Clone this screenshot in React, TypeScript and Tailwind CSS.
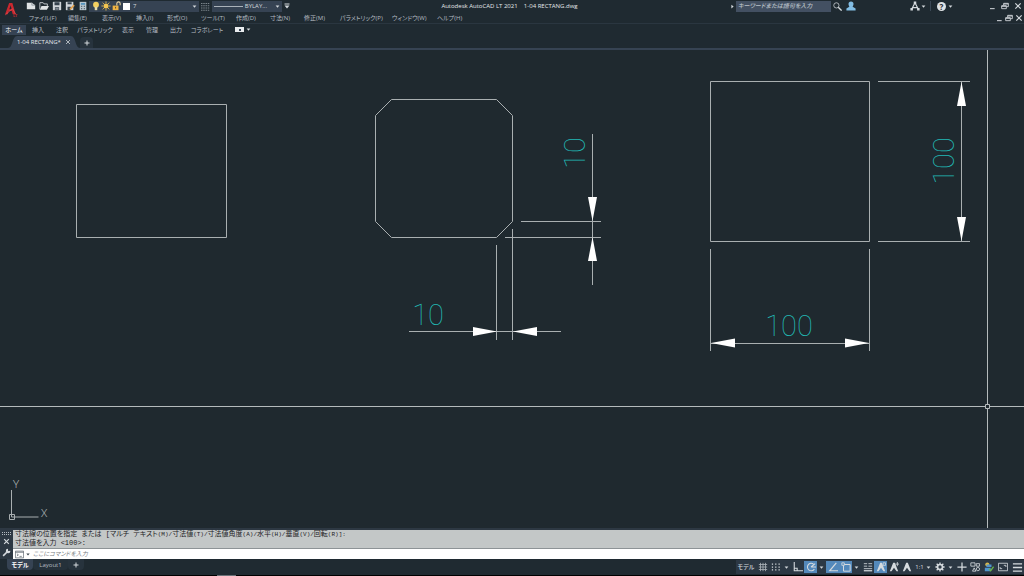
import React from 'react';
import clsx from 'clsx';

const MENUS = [
  { label: 'ファイル(F)', width: 'w-[39px]' },
  { label: '編集(E)', width: 'w-[34px]' },
  { label: '表示(V)', width: 'w-[34px]' },
  { label: '挿入(I)', width: 'w-[31px]' },
  { label: '形式(O)', width: 'w-[34px]' },
  { label: 'ツール(T)', width: 'w-[35px]' },
  { label: '作成(D)', width: 'w-[34px]' },
  { label: '寸法(N)', width: 'w-[34px]' },
  { label: '修正(M)', width: 'w-[36px]' },
  { label: 'パラメトリック(P)', width: 'w-[52px]' },
  { label: 'ウィンドウ(W)', width: 'w-[45px]' },
  { label: 'ヘルプ(H)', width: 'w-[39px]' },
];

const RIBBON_TABS = [
  { label: 'ホーム', width: 'w-[24px]' },
  { label: '挿入', width: 'w-[24px]' },
  { label: '注釈', width: 'w-[24px]' },
  { label: 'パラメトリック', width: 'w-[42px]' },
  { label: '表示', width: 'w-[24px]' },
  { label: '管理', width: 'w-[24px]' },
  { label: '出力', width: 'w-[24px]' },
  { label: 'コラボレート', width: 'w-[38px]' },
];

const DIM_OPTIONS = [
  { label: 'マルチ テキスト', keyword: '(M)' },
  { label: '寸法値', keyword: '(T)' },
  { label: '寸法値角度', keyword: '(A)' },
  { label: '水平', keyword: '(H)' },
  { label: '垂直', keyword: '(V)' },
  { label: '回転', keyword: '(R)' },
];

const Caret = () => (
  <svg viewBox="0 0 6 4" className="w-[5px] h-[3px] shrink-0" fill="#d5dade">
    <path d="M0.5 0.5h5L3 3.5z" />
  </svg>
);

interface IconProps {
  children: React.ReactNode;
  className?: string;
}

const Icon: React.FC<IconProps> = ({ children, className }) => (
  <svg viewBox="0 0 12 12" className={clsx('shrink-0', className || 'w-[10px] h-[10px]')} fill="none" stroke="#d5dade" strokeWidth="1">
    {children}
  </svg>
);

interface IconButtonProps {
  label: string;
  width?: string;
  active?: boolean;
  children: React.ReactNode;
}

const IconButton: React.FC<IconButtonProps> = ({ label, width = 'w-[13px]', active, children }) => (
  <button
    aria-label={label}
    className={clsx('h-[12px] shrink-0 flex items-center justify-center', width, active && 'bg-[#5489bb]')}
  >
    {children}
  </button>
);

const WindowButtons = ({ small }: { small?: boolean }) => {
  const width = small ? 'w-[10px]' : 'w-[13px]';
  return (
    <div className="flex">
      <IconButton label="最小化" width={width}>
        <Icon className="w-[8px] h-[8px]"><path d="M3 10h7" strokeWidth="1.5" /></Icon>
      </IconButton>
      <IconButton label="元に戻す" width={width}>
        <Icon className="w-[8px] h-[8px]"><path d="M1 5.5h7v4.5H1zM4 5V2h7v5H8.500M4 3h7M1 6.500h7" strokeWidth="1.3" /></Icon>
      </IconButton>
      <IconButton label="閉じる" width={width}>
        <Icon className="w-[8px] h-[8px]"><path d="M2 2l8 8M10 2l-8 8" strokeWidth="1.8" /></Icon>
      </IconButton>
    </div>
  );
};

const QuickAccess = () => (
  <div className="flex">
    <IconButton label="新規">
      <Icon><path d="M1 2h6l4 3v5H1z" fill="#dfe3e5" stroke="none" /><path d="M7 2v3h4" stroke="#8a949c" /></Icon>
    </IconButton>
    <IconButton label="開く">
      <Icon><path d="M1 10V2h4l1 1.500h4V6" /><path d="M3 6h9l-2.500 4.500H1z" fill="#dfe3e5" stroke="none" /></Icon>
    </IconButton>
    <IconButton label="上書き保存">
      <Icon><path d="M1 1h10v10H1z" fill="#cfd4d8" stroke="none" /><path d="M3 1.500h6V5H3zM3.500 7.500h5V11h-5z" fill="#35424d" stroke="none" /><path d="M4 9.500h4" /></Icon>
    </IconButton>
    <IconButton label="名前を付けて保存">
      <Icon><path d="M1 1h9v10H1z" fill="#cfd4d8" stroke="none" /><path d="M3 1.500h5V4H3zM3 7h4v4H3z" fill="#35424d" stroke="none" /><path d="M6 10l5-5" stroke="#e0a04c" strokeWidth="2" /></Icon>
    </IconButton>
    <IconButton label="印刷">
      <Icon><path d="M2 1h8v10H2z" fill="#b9c6cf" stroke="none" /><path d="M3.500 2.500h5v2h-5z" fill="#4f91bd" stroke="none" /><path d="M4 6.500h1M7 6.500h1M4 9h1M7 9h1" stroke="#33404a" strokeWidth="1.500" /></Icon>
    </IconButton>
  </div>
);

const LayerBox = () => (
  <button className="w-[110px] h-[11px] bg-[#364353] flex items-center px-[2px]">
    <Icon className="w-[10px] h-[10px]">
      <circle cx="6" cy="4.500" r="3.500" fill="#f4d060" stroke="none" />
      <path d="M4.500 7h3v4h-3z" fill="#e6dcae" stroke="none" />
    </Icon>
    <Icon className="w-[10px] h-[10px]">
      <circle cx="6" cy="6" r="3" fill="#f2c450" stroke="none" />
      <path d="M6 0.500v2M6 9.500v2M0.500 6h2M9.500 6h2M2 2l1.500 1.500M8.500 8.500L10 10M10 2L8.500 3.500M3.500 8.500L2 10" stroke="#f2c450" />
    </Icon>
    <Icon className="w-[10px] h-[10px]">
      <path d="M2 5.500h7V11H2z" fill="#efb443" stroke="none" />
      <path d="M7 5.500V3a2 2 0 0 1 4 0v2" stroke="#e6d3a0" strokeWidth="1.300" />
      <path d="M5.500 7v2" stroke="#4a3a20" />
    </Icon>
    <span className="w-[7px] h-[7px] bg-white ml-[2px] mr-[3px]" />
    <span className="text-[#d5dade]">7</span>
    <span className="ml-auto"><Caret /></span>
  </button>
);

const TitleBar = () => (
  <div className="flex items-center h-[12px] text-[6px] font-medium">
    <QuickAccess />
    <LayerBox />
    <IconButton label="線種">
      <Icon className="w-[9px] h-[9px]">
        <path d="M0 2h12M0 5h12M0 8h12M0 11h12" stroke="#9aa3aa" strokeDasharray="2 1" />
      </Icon>
    </IconButton>
    <button className="w-[70px] h-[11px] bg-[#364353] flex items-center gap-[2px] px-[2px]">
      <span className="flex-1 h-px bg-[#aab2b9]" />
      <span>BYLAY...</span>
      <span className="ml-[6px]"><Caret /></span>
    </button>
    <IconButton label="カスタマイズ" width="w-[9px]">
      <Icon className="w-[6px] h-[6px]"><path d="M1 2h10" strokeWidth="2" /><path d="M1 5h10L6 11z" fill="#d5dade" stroke="none" /></Icon>
    </IconButton>
    <h1 className="flex-1 text-center text-[#e4e8eb] whitespace-pre">Autodesk AutoCAD LT 2021    1-04 RECTANG.dwg</h1>
    <div className="flex items-center">
      <IconButton label="検索を展開" width="w-[8px]">
        <svg viewBox="0 0 4 6" className="w-[3px] h-[5px]" fill="#d5dade"><path d="M0.500 0.500v5L3.500 3z" /></svg>
      </IconButton>
      <input
        aria-label="検索"
        placeholder="キーワードまたは語句を入力"
        className="w-[95px] h-[11px] bg-[#435062] px-[2px] italic placeholder:text-[#b9c0c7] outline-none"
      />
      <IconButton label="検索実行">
        <Icon className="w-[9px] h-[9px]"><circle cx="4.500" cy="4.500" r="3.500" /><path d="M7 7l4.500 4.500" strokeWidth="1.800" /></Icon>
      </IconButton>
      <IconButton label="サインイン">
        <Icon><path d="M6 0.500a3 3 0 0 1 3 3C9 5.500 8 6 8 7l3.500 2v2.500H0.500V9L4 7c0-1-1-1.500-1-3.500a3 3 0 0 1 3-3z" fill="#82bde4" stroke="none" /></Icon>
      </IconButton>
    </div>
    <div className="flex items-center ml-[51px] mr-[32px]">
      <IconButton label="Autodesk App Store">
        <Icon>
          <path d="M6 2L2 10M6 2l4 8M3 8l6 0" strokeWidth="1.400" />
          <path d="M4.500 0.500h3v3h-3zM0.500 8.500h3v3h-3zM8.500 8.500h3v3h-3z" fill="#d5dade" stroke="none" />
        </Icon>
      </IconButton>
      <Caret />
      <span className="w-px h-[10px] bg-[#3b4855] mx-[4px]" />
      <IconButton label="ヘルプ">
        <span className="w-[9px] h-[9px] rounded-full bg-[#dfe3e5] text-[#1f2a31] text-[8px] leading-[9px] font-bold">?</span>
      </IconButton>
      <Caret />
    </div>
    <WindowButtons />
  </div>
);

const Header = () => (
  <header className="bg-[#1f2a31] border-b-2 border-[#364353]">
    <div className="flex border-b border-[#2a3640]">
      <button aria-label="アプリケーション メニュー" className="w-[24px] shrink-0 flex justify-center">
        <svg viewBox="0 0 24 24" className="w-[24px] h-[23px]">
          <path d="M4.800 14.800L9 3h3.400l3.400 11.800h-3l-1-3.200H8.600l-1.100 3.200z" fill="#c9282f" />
          <path d="M10.600 5.600l-1.400 4h2.400z" fill="#1f2a31" />
          <path d="M5 15.500L12.400 9l3.400 5.800" fill="none" stroke="#e24a4d" strokeWidth="0.800" />
          <text x="13" y="18" fontSize="4" fontWeight="bold" fill="#c9282f">LT</text>
        </svg>
      </button>
      <div className="flex-1 min-w-0">
        <TitleBar />
        <div className="flex items-center justify-between h-[11px]">
          <nav className="flex pl-[5px] text-[6px] text-[#b4bbc1]">
            {MENUS.map((menu) => (
              <button key={menu.label} className={clsx('text-left whitespace-nowrap', menu.width)}>{menu.label}</button>
            ))}
          </nav>
          <WindowButtons small />
        </div>
      </div>
    </div>
    <div className="flex items-center h-[11px] pl-[2px] text-[6px] text-[#b4bbc1]">
      {RIBBON_TABS.map((tab, i) => (
        <button
          key={tab.label}
          className={clsx('h-[10px] leading-[10px] text-center whitespace-nowrap', tab.width, i === 0 && 'bg-[#364353] text-white')}
        >
          {tab.label}
        </button>
      ))}
      <button aria-label="リボン表示" className="flex items-center gap-[2px] ml-[9px]">
        <span className="w-[9px] h-[5px] bg-[#e8ebed] flex items-center justify-center">
          <span className="w-[2px] h-[2px] bg-[#364353]" />
        </span>
        <Caret />
      </button>
    </div>
    <div className="flex items-end h-[13px] pt-px pl-[8px] text-[6px]">
      <div className="relative h-[12px] w-[72px] flex items-center justify-between px-[9px]">
        <svg viewBox="0 0 72 12" preserveAspectRatio="none" className="absolute inset-0 w-full h-full" fill="#364353">
          <path d="M0 12C5 12 4 0 9 0h54c5 0 4 12 9 12z" />
        </svg>
        <button className="relative text-[#e4e8eb] whitespace-nowrap font-medium">1-04 RECTANG*</button>
        <button aria-label="タブを閉じる" className="relative">
          <Icon className="w-[6px] h-[6px]"><path d="M2 2l8 8M10 2l-8 8" strokeWidth="1.500" /></Icon>
        </button>
      </div>
      <button aria-label="新しいタブ" className="w-[13px] h-[11px] rounded-t bg-[#27333d] flex items-center justify-center">
        <Icon className="w-[6px] h-[6px]"><path d="M6 1v10M1 6h10" strokeWidth="2" /></Icon>
      </button>
    </div>
  </header>
);

const ARROWS = [
  'M592.5 221l-4.500-24h9z',
  'M592.5 237l-4.500 24h9z',
  'M497 331.500l-24-4.500v9z',
  'M513 331.500l24-4.500v9z',
  'M961.500 82l-4.500 24h9z',
  'M961.500 241l-4.500-24h9z',
  'M711 343l24-4.500v9z',
  'M869 343l-24-4.500v9z',
];

const Drawing = () => (
  <main className="relative flex-1 min-h-0 bg-[#1f292f] overflow-hidden">
    <svg viewBox="0 50 1024 478" preserveAspectRatio="xMinYMin meet" className="absolute inset-0 w-full h-full">
      <g fill="none" stroke="#a9afb1" strokeWidth="1">
        <path d="M76.500 104.500h150v133h-150z" />
        <path d="M391.500 99.500h105l16 16v106l-16 16h-105l-16-16v-106z" />
        <path d="M710.500 81.500h159v160h-159z" />
        <path d="M521 221.500h80M505 237.500h96M592.500 134v151" />
        <path d="M496.500 245v95M512.500 229v111M409 331.500h152" />
        <path d="M878 81.500h92M878 241.500h92M961.500 82v159" />
        <path d="M710.500 249v102M869.500 249v102M711 343.500h158" />
      </g>
      {ARROWS.map((d) => (
        <path key={d} d={d} fill="#fff" />
      ))}
      <g fill="#22b8b4" fontFamily="Roboto, 'Open Sans', sans-serif" fontSize="29" fontWeight="100" textAnchor="middle">
        <text x="428" y="325">10</text>
        <text x="789" y="336">100</text>
        <text transform="translate(585 153) rotate(-90)">10</text>
        <text transform="translate(954 161) rotate(-90)">100</text>
      </g>
      {/* UCS icon */}
      <g fill="none" stroke="#a9afb1">
        <path d="M11.500 490v27h27M9.500 514.500h5v5h-5z" />
      </g>
      <g fill="#a9afb1" fontFamily="Roboto, sans-serif" fontSize="11" fontWeight="300" textAnchor="middle">
        <text x="16" y="488">Y</text>
        <text x="44" y="517">X</text>
      </g>
      {/* Crosshair */}
      <g fill="none" stroke="#b4babc">
        <path d="M0 406.500h1024M987.500 50v478" />
        <path d="M985.500 404.500h4v4h-4z" fill="#1f292f" />
      </g>
    </svg>
  </main>
);

const CommandLine = () => (
  <section className="flex bg-[#2d3843] pt-[2px]">
    <div className="w-[13px] shrink-0 flex flex-col items-center justify-between py-[2px]">
      <span className="w-[9px] h-[3px] border-y border-dotted border-[#b4bbc1]" />
      <button aria-label="コマンドラインを閉じる">
        <Icon className="w-[7px] h-[7px]"><path d="M2 2l8 8M10 2l-8 8" strokeWidth="2" /></Icon>
      </button>
      <button aria-label="カスタマイズ">
        <Icon className="w-[9px] h-[9px]">
          <path d="M1.500 10.500L7 5" strokeWidth="2.200" />
          <path d="M11 3.500a3 3 0 1 1-3-2.500v2.500l1 0.500z" fill="#d5dade" stroke="none" />
        </Icon>
      </button>
    </div>
    <div className="flex-1 min-w-0">
      <div className="bg-[#c3c7c7] border-b border-[#8d9396] px-[2px] text-[7px] leading-[9px] text-[#1d2225] font-['Liberation_Mono','Noto_Sans_CJK_JP',monospace]">
        <p className="h-[9px] whitespace-nowrap">
          寸法線の位置を指定 または [
          {DIM_OPTIONS.map((option, i) => (
            <React.Fragment key={option.keyword}>
              {option.label}
              <span className="text-[6px]">{option.keyword}{i < DIM_OPTIONS.length - 1 ? '/' : ']:'}</span>
            </React.Fragment>
          ))}
        </p>
        <p className="h-[9px] whitespace-nowrap">寸法値を入力 &lt;100&gt;:</p>
      </div>
      <div className="flex items-center h-[10px] bg-white px-[2px]">
        <button aria-label="最近使用したコマンド" className="flex items-center gap-[2px]">
          <Icon className="w-[9px] h-[9px]"><path d="M0.500 1.500h11v9H0.500zM0.500 3h11M2.500 5l2 1.500-2 1.500M6 8.500h3" stroke="#59636b" /></Icon>
          <svg viewBox="0 0 6 4" className="w-[4px] h-[3px]" fill="#3d464d"><path d="M0.500 0.500h5L3 3.500z" /></svg>
        </button>
        <input
          aria-label="コマンド"
          placeholder="ここにコマンドを入力"
          className="flex-1 h-[10px] px-[3px] text-[6px] italic text-black placeholder:text-[#777d82] outline-none"
        />
      </div>
    </div>
  </section>
);

const AnnotationFigure = ({ mark }: { mark: string }) => (
  <Icon>
    <path d="M5 1h2l4 10H9L6 7l-3 4H1z" fill="#d5dade" stroke="none" />
    <path d={mark} />
  </Icon>
);

const StatusBar = () => (
  <footer className="relative flex items-start justify-between bg-[#1f2a31] h-[17px] border-b border-black text-[6px]">
    <div className="flex pl-[7px] h-[11px]">
      <button className="w-[26px] rounded-b bg-[#364353] text-white font-bold">モデル</button>
      <button className="w-[35px] rounded-b bg-[#25313a] text-[#b4bbc1]">Layout1</button>
      <button aria-label="新しいレイアウト" className="w-[16px] rounded-b bg-[#27333d] flex items-center justify-center">
        <Icon className="w-[6px] h-[6px]"><path d="M6 1v10M1 6h10" strokeWidth="2" /></Icon>
      </button>
    </div>
    <span className="absolute left-[217px] -bottom-px w-[19px] h-px bg-[#6b7278]" />
    <div className="flex items-center h-[14px] mt-px bg-[#2c3844] text-[#d5dade]">
      <button className="w-[20px] whitespace-nowrap font-medium">モデル</button>
      <IconButton label="グリッド">
        <Icon><path d="M3 1v10M6 1v10M9 1v10M1 3h10M1 6h10M1 9h10" stroke="#aab1b7" /></Icon>
      </IconButton>
      <IconButton label="スナップ">
        <Icon><path d="M1 2.500h10M1 6h10M1 9.500h10" strokeWidth="1.500" strokeDasharray="1.500 2.500" /></Icon>
      </IconButton>
      <IconButton label="スナップ設定" width="w-[9px]"><Caret /></IconButton>
      <IconButton label="直交モード">
        <Icon><path d="M1.500 0v10.500H12M1.500 7.500h3.500v3" strokeWidth="1.300" /></Icon>
      </IconButton>
      <IconButton label="極トラッキング" active>
        <Icon><path d="M10 8.500A4.500 4.500 0 1 1 9 2.500M6 6l5-4M6 6h6" strokeWidth="1.300" /></Icon>
      </IconButton>
      <IconButton label="極トラッキング設定" width="w-[9px]"><Caret /></IconButton>
      <IconButton label="オブジェクト スナップ トラッキング" active>
        <Icon><path d="M10 1L2 10.500h10" strokeWidth="1.400" /></Icon>
      </IconButton>
      <IconButton label="オブジェクト スナップ" active>
        <Icon><path d="M3 3h8v8H3z" strokeWidth="1.200" /><path d="M1 1h3v3H1z" fill="#5489bb" /></Icon>
      </IconButton>
      <IconButton label="オブジェクト スナップ設定" width="w-[9px]"><Caret /></IconButton>
      <IconButton label="線の太さ">
        <Icon><path d="M1 2h4M6.500 2H11M1 5h4M6.500 5H11M1 8h10" /><path d="M1 10.500h10" strokeWidth="1.500" /></Icon>
      </IconButton>
      <IconButton label="注釈の可視性" active><AnnotationFigure mark="M8.500 1h3v3h-3z" /></IconButton>
      <IconButton label="自動尺度"><AnnotationFigure mark="M10 0v5M7.500 2.500h4.500" /></IconButton>
      <IconButton label="注釈尺度"><AnnotationFigure mark="" /></IconButton>
      <button className="w-[20px] flex items-center justify-center gap-[2px]">1:1<Caret /></button>
      <IconButton label="ワークスペース">
        <Icon>
          <circle cx="6" cy="6" r="3" strokeWidth="2" />
          <path d="M6 0.500v2M6 9.500v2M0.500 6h2M9.500 6h2M2 2l1.500 1.500M8.500 8.500L10 10M10 2L8.500 3.500M3.500 8.500L2 10" strokeWidth="1.600" />
        </Icon>
      </IconButton>
      <IconButton label="ワークスペース設定" width="w-[9px]"><Caret /></IconButton>
      <IconButton label="注釈モニター">
        <Icon><path d="M6 0.500v11M0.500 6h11" strokeWidth="1.500" /></Icon>
      </IconButton>
      <IconButton label="オブジェクトを選択表示" width="w-[14px]">
        <Icon><path d="M1 1h5v4H1z" /><path d="M7.500 5V2h4v3z" /><path d="M3 11l2-4 2 4z" /><circle cx="9.500" cy="8.500" r="2" /></Icon>
      </IconButton>
      <IconButton label="グラフィックス パフォーマンス" width="w-[14px]">
        <Icon>
          <circle cx="4" cy="3" r="2.500" fill="#d9b84a" stroke="none" />
          <path d="M3 3h6v3H3zM1 7h7v4H1z" fill="#4f94cd" stroke="none" />
          <path d="M6 8.500l2 2 3.500-5" stroke="#69b54c" strokeWidth="1.600" />
        </Icon>
      </IconButton>
      <IconButton label="フルスクリーン表示" width="w-[14px]">
        <Icon><path d="M0.500 1.500h11v9H0.500z" /><path d="M7 4h2.500v2M5 8H2.500V6" /></Icon>
      </IconButton>
      <IconButton label="カスタマイズ" width="w-[14px]">
        <Icon className="w-[11px] h-[11px]"><path d="M1 2h10M1 6h10M1 10h10" strokeWidth="1.500" /></Icon>
      </IconButton>
    </div>
  </footer>
);

const App: React.FC = () => (
  <div
    lang="ja"
    className="min-h-screen flex flex-col bg-[#1f2a31] text-[#d5dade] leading-[10px] font-['Open_Sans','Noto_Sans_CJK_JP',sans-serif] [font-feature-settings:'palt']"
  >
    <Header />
    <Drawing />
    <CommandLine />
    <StatusBar />
  </div>
);

export default App;
